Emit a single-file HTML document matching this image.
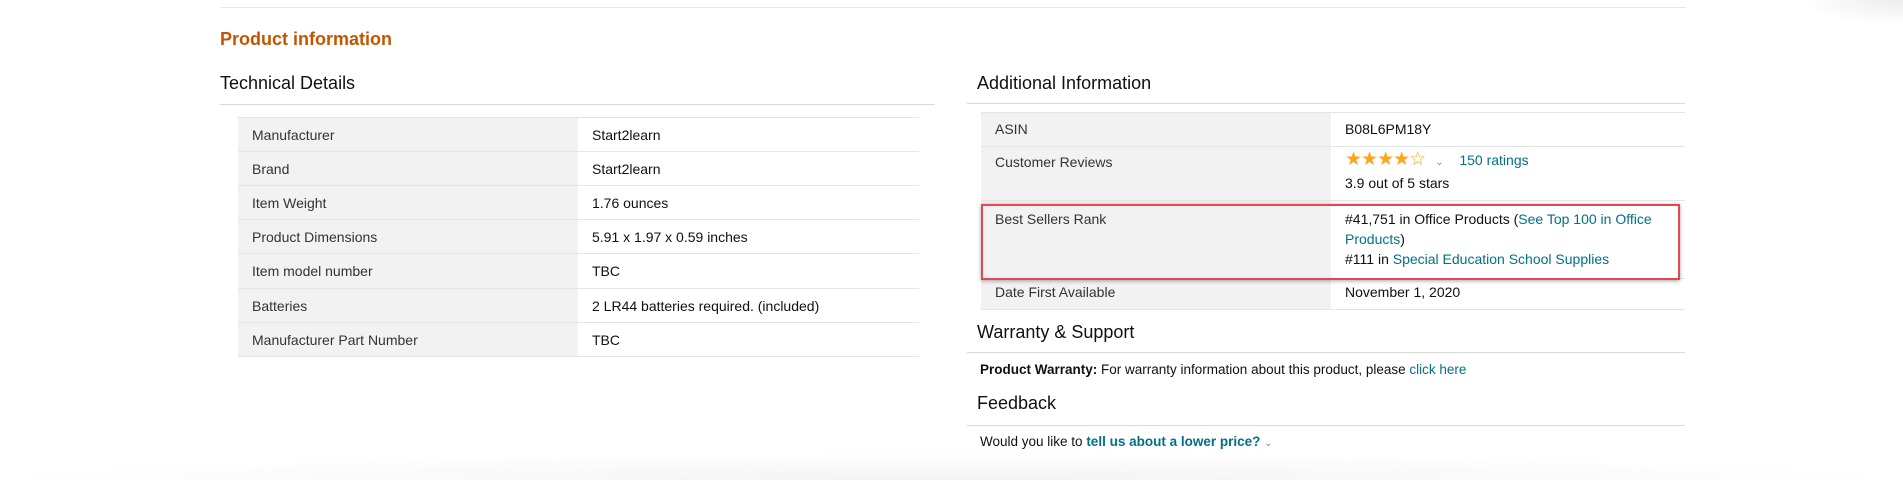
<!DOCTYPE html>
<html><head><meta charset="utf-8"><style>
*{margin:0;padding:0;box-sizing:border-box}
body{width:1903px;height:480px;background:#fff;font-family:"Liberation Sans",Arial,sans-serif;color:#0f1111;position:relative;overflow:hidden;font-size:14px}
.a{position:absolute}
.h{font-size:18px;color:#0f1111;white-space:nowrap}
.line{position:absolute;height:1px;background:#d5d9d9}
table{position:absolute;border-collapse:collapse}
td{border-top:1px solid #e3e6e6;border-bottom:1px solid #e3e6e6;vertical-align:top;padding:7px 14px 0;font-size:14px;line-height:20px}
td.l{background:#f2f2f2;color:#333;padding-left:14px}
td.v{padding-left:14px;color:#0f1111}
a{color:#007185;text-decoration:none}
</style></head><body>
<div class="line" style="left:220px;top:7px;width:1466px;background:#e7e7e7"></div>
<div class="a" style="left:220px;top:29px;font-size:18px;font-weight:bold;color:#c45500">Product information</div>
<div class="a h" style="left:220px;top:73px">Technical Details</div>
<div class="line" style="left:220px;top:104px;width:715px"></div>
<table style="left:238px;top:117px;width:681px">
<tr style="height:34px"><td class="l" style="width:340px">Manufacturer</td><td class="v">Start2learn</td></tr>
<tr style="height:34px"><td class="l">Brand</td><td class="v">Start2learn</td></tr>
<tr style="height:34px"><td class="l">Item Weight</td><td class="v">1.76 ounces</td></tr>
<tr style="height:34px"><td class="l">Product Dimensions</td><td class="v">5.91 x 1.97 x 0.59 inches</td></tr>
<tr style="height:35px"><td class="l">Item model number</td><td class="v">TBC</td></tr>
<tr style="height:34px"><td class="l">Batteries</td><td class="v">2 LR44 batteries required. (included)</td></tr>
<tr style="height:34px"><td class="l">Manufacturer Part Number</td><td class="v">TBC</td></tr>
</table>

<div class="a h" style="left:977px;top:73px">Additional Information</div>
<div class="line" style="left:967px;top:103px;width:718px"></div>
<table style="left:981px;top:112px;width:704px">
<tr style="height:34px"><td class="l" style="width:350px;padding-top:6px">ASIN</td><td class="v" style="padding-top:6px">B08L6PM18Y</td></tr>
<tr style="height:54px"><td class="l" style="padding-top:5px">Customer Reviews</td><td class="v" style="padding-top:3px"><span style="color:#ffa41c;font-size:19px;letter-spacing:-1px;line-height:20px">★★★★☆</span> <span style="color:#888;font-size:10px;margin:0 12px 0 6px">⌄</span> <a>150 ratings</a><br>3.9 out of 5 stars</td></tr>
<tr style="height:78px"><td class="l" style="padding-top:8px">Best Sellers Rank</td><td class="v" style="padding-top:8px">#41,751 in Office Products (<a>See Top 100 in Office Products</a>)<br>#111 in <a>Special Education School Supplies</a></td></tr>
<tr style="height:31px"><td class="l" style="padding-top:3px">Date First Available</td><td class="v" style="padding-top:3px">November 1, 2020</td></tr>
</table>
<div class="a" style="left:981px;top:204px;width:699px;height:76px;border:2px solid #e4474d;box-shadow:0 1px 4px rgba(0,0,0,.35)"></div>

<div class="a h" style="left:977px;top:322px">Warranty &amp; Support</div>
<div class="line" style="left:967px;top:352px;width:718px"></div>
<div class="a" style="left:980px;top:362px;font-size:13.5px;white-space:nowrap"><b>Product Warranty:</b> For warranty information about this product, please <a>click here</a></div>
<div class="a h" style="left:977px;top:393px">Feedback</div>
<div class="line" style="left:967px;top:425px;width:718px"></div>
<div class="a" style="left:980px;top:434px;font-size:13.5px;white-space:nowrap">Would you like to <b style="color:#007185">tell us about a lower price?</b> <span style="color:#888;font-size:10px">⌄</span></div>
<div class="a" style="left:0;top:452px;width:1903px;height:28px;background:radial-gradient(ellipse 50% 100% at 50% 100%,#f3f3f3,#fafafa 60%,#fff 100%)"></div>
<div class="a" style="left:1800px;top:0;width:103px;height:25px;background:radial-gradient(ellipse at 100% 0,#ececec,#fff 70%)"></div>
</body></html>
